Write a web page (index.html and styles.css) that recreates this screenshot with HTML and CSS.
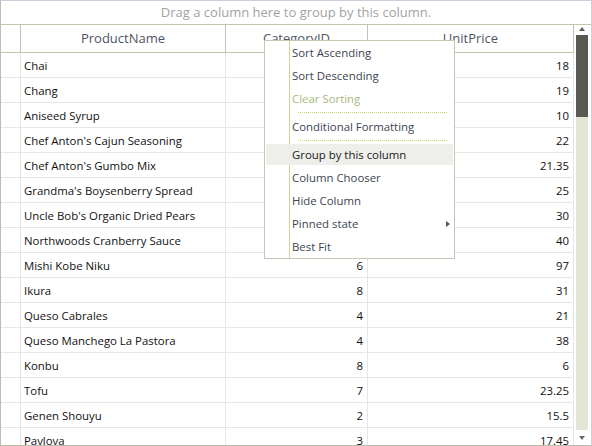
FILE: index.html
```html
<!DOCTYPE html>
<html>
<head>
<meta charset="utf-8">
<link rel="stylesheet" href="styles.css">
</head>
<body>
<div class="grid">
  <div class="group-panel">Drag a column here to group by this column.</div>
  <div class="main">
    <div class="table">
      <div class="row header">
        <div class="cell ind"></div>
        <div class="cell hd">ProductName</div>
        <div class="cell hd">CategoryID</div>
        <div class="cell hd">UnitPrice</div>
      </div>
      <div class="rows">
        <div class="row"><div class="cell ind"></div><div class="cell txt">Chai</div><div class="cell num"></div><div class="cell num">18</div></div>
        <div class="row"><div class="cell ind"></div><div class="cell txt">Chang</div><div class="cell num"></div><div class="cell num">19</div></div>
        <div class="row"><div class="cell ind"></div><div class="cell txt">Aniseed Syrup</div><div class="cell num"></div><div class="cell num">10</div></div>
        <div class="row"><div class="cell ind"></div><div class="cell txt">Chef Anton's Cajun Seasoning</div><div class="cell num"></div><div class="cell num">22</div></div>
        <div class="row"><div class="cell ind"></div><div class="cell txt">Chef Anton's Gumbo Mix</div><div class="cell num"></div><div class="cell num">21.35</div></div>
        <div class="row"><div class="cell ind"></div><div class="cell txt">Grandma's Boysenberry Spread</div><div class="cell num"></div><div class="cell num">25</div></div>
        <div class="row"><div class="cell ind"></div><div class="cell txt">Uncle Bob's Organic Dried Pears</div><div class="cell num"></div><div class="cell num">30</div></div>
        <div class="row"><div class="cell ind"></div><div class="cell txt">Northwoods Cranberry Sauce</div><div class="cell num"></div><div class="cell num">40</div></div>
        <div class="row"><div class="cell ind"></div><div class="cell txt">Mishi Kobe Niku</div><div class="cell num">6</div><div class="cell num">97</div></div>
        <div class="row"><div class="cell ind"></div><div class="cell txt">Ikura</div><div class="cell num">8</div><div class="cell num">31</div></div>
        <div class="row"><div class="cell ind"></div><div class="cell txt">Queso Cabrales</div><div class="cell num">4</div><div class="cell num">21</div></div>
        <div class="row"><div class="cell ind"></div><div class="cell txt">Queso Manchego La Pastora</div><div class="cell num">4</div><div class="cell num">38</div></div>
        <div class="row"><div class="cell ind"></div><div class="cell txt">Konbu</div><div class="cell num">8</div><div class="cell num">6</div></div>
        <div class="row"><div class="cell ind"></div><div class="cell txt">Tofu</div><div class="cell num">7</div><div class="cell num">23.25</div></div>
        <div class="row"><div class="cell ind"></div><div class="cell txt">Genen Shouyu</div><div class="cell num">2</div><div class="cell num">15.5</div></div>
        <div class="row"><div class="cell ind"></div><div class="cell txt">Pavlova</div><div class="cell num">3</div><div class="cell num">17.45</div></div>
      </div>
    </div>
    <div class="scrollbar">
      <div class="arrow up"></div>
      <div class="track"><div class="thumb"></div></div>
      <div class="arrow down"></div>
    </div>
  </div>
  <div class="menu">
    <div class="item">Sort Ascending</div>
    <div class="item">Sort Descending</div>
    <div class="item disabled">Clear Sorting</div>
    <div class="sep"></div>
    <div class="item">Conditional Formatting</div>
    <div class="sep"></div>
    <div class="item hot"><span class="hot-bg">Group by this column</span></div>
    <div class="item">Column Chooser</div>
    <div class="item">Hide Column</div>
    <div class="item sub">Pinned state<span class="sub-arrow"></span></div>
    <div class="item">Best Fit</div>
  </div>
</div>
</body>
</html>
```

FILE: styles.css
```css
* { box-sizing: border-box; }
html, body { margin: 0; padding: 0; background: #fff; }
body { font-family: "Open Sans", "Noto Sans", sans-serif; }

.grid {
  position: relative;
  width: 592px;
  height: 446px;
  display: flex;
  flex-direction: column;
  border-top: 1px solid #c9d2dc;
  border-right: 1px solid #c9d2dc;
  border-left: 1px solid #bdbdae;
  border-bottom: 1px solid #bdbdae;
  overflow: hidden;
  background: #fff;
}

.group-panel {
  height: 24px;
  flex: none;
  border-bottom: 1px solid #c4c4b2;
  text-align: center;
  font-size: 13px;
  line-height: 23px;
  color: #a3a3a3;
}

.main {
  flex: 1;
  display: flex;
  min-height: 0;
}

.table {
  width: 573px;
  flex: none;
  display: flex;
  flex-direction: column;
  overflow: hidden;
}

.row {
  display: grid;
  grid-template-columns: 20px 205px 142px 206px;
  height: 25px;
  flex: none;
}

.cell {
  border-right: 1px solid #e6e6e6;
  border-bottom: 1px solid #e6e6e6;
  font-size: 11.4px;
  line-height: 25px;
  color: #111;
  white-space: nowrap;
  overflow: hidden;
}

.txt { padding-left: 3px; }
.num { text-align: right; padding-right: 4px; }

.header { height: 28px; }
.header .cell {
  border-right-color: #c4c4b2;
  border-bottom-color: #c4c4b2;
}
.header .hd {
  text-align: center;
  font-size: 13px;
  line-height: 27px;
  color: #4f5663;
}

.rows { display: flex; flex-direction: column; }

.scrollbar {
  width: 17px;
  flex: none;
  display: flex;
  flex-direction: column;
  align-items: center;
  padding-top: 2px;
}
.arrow {
  width: 0;
  height: 0;
  border-left: 3.5px solid transparent;
  border-right: 3.5px solid transparent;
  flex: none;
}
.arrow.up { border-bottom: 4px solid #5d5d56; margin: 0 0 4px -1px; }
.arrow.down { border-top: 4px solid #6c6c66; margin: 6px 0 0 -1px; }
.track {
  width: 12px;
  height: 395px;
  background: #e4e4d7;
  margin-left: -1px;
}
.thumb {
  height: 82px;
  background: #5a5a52;
}

.menu {
  position: absolute;
  left: 263px;
  top: 39px;
  width: 191px;
  height: 219px;
  background: #fff;
  border: 1px solid #c6c6b4;
  display: flex;
  flex-direction: column;
  background-image: linear-gradient(#d3d393, #d3d393);
  background-size: 1px 100%;
  background-position: 24px 0;
  background-repeat: no-repeat;
}
.item {
  position: relative;
  height: 23px;
  line-height: 23px;
  padding-left: 27px;
  font-size: 11.4px;
  color: #3d4452;
  white-space: nowrap;
  flex: none;
}
.item.disabled { color: #a9b87c; }
.item.hot { padding: 1px 0 1px 1px; }
.hot-bg {
  display: block;
  height: 21px;
  width: 187px;
  line-height: 21px;
  padding-left: 26px;
  background: #eeeeea;
  color: #222;
}
.sep {
  height: 5px;
  flex: none;
  margin-left: 33px;
  margin-right: 6px;
  background-image: linear-gradient(to right, #c9d66a 50%, transparent 50%);
  background-size: 2px 1px;
  background-repeat: repeat-x;
  background-position: 0 2px;
}
.sub-arrow {
  position: absolute;
  right: 4px;
  top: 9px;
  width: 0;
  height: 0;
  border-top: 3px solid transparent;
  border-bottom: 3px solid transparent;
  border-left: 4px solid #555;
}
```
